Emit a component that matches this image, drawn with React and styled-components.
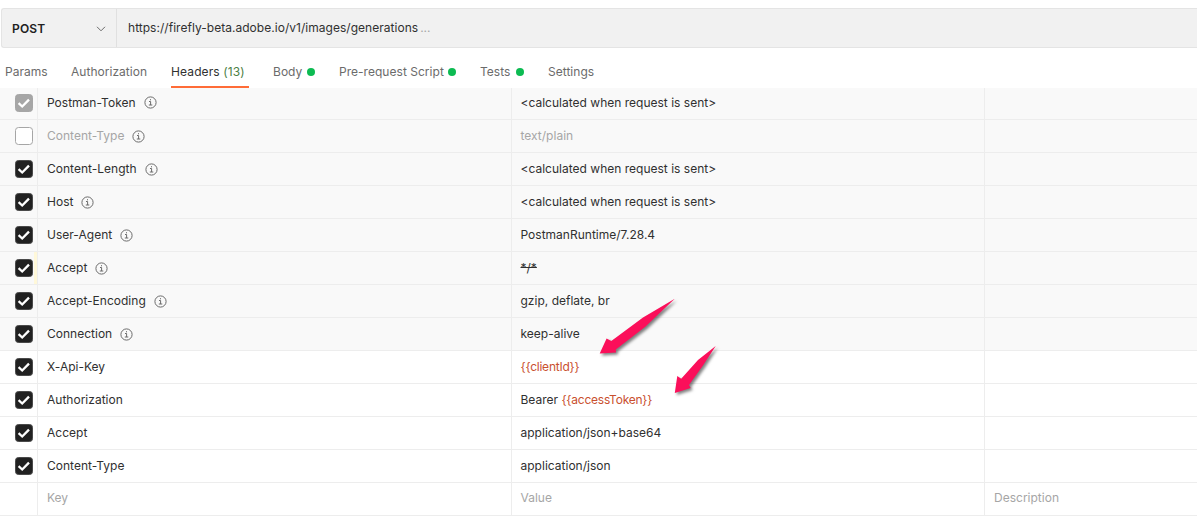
import React from "react";
import styled, { createGlobalStyle } from "styled-components";

const GlobalStyle = createGlobalStyle`
  * { box-sizing: border-box; }
  body {
    margin: 0;
    background: #fff;
    color: #303030;
    font: 400 12px/20px Inter, "Liberation Sans", sans-serif;
    overflow: hidden;
  }
`;

const Page = styled.main`
  position: relative;
  width: 1197px;
  height: 518px;
  padding-top: 8px;
  overflow: hidden;
`;

const UrlBar = styled.div`
  display: flex;
  height: 40px;
  margin-left: 1px;
  background: #f1f1f1;
  border: 1px solid #e4e4e4;
  border-right: 0;
  border-radius: 3px 0 0 3px;
`;

const Method = styled.div`
  display: flex;
  align-items: center;
  justify-content: space-between;
  width: 115px;
  padding: 2px 10px 0 10px;
  border-right: 1px solid #e0e0e0;
  color: #212121;
  font-weight: 600;
`;

const Url = styled.div`
  display: flex;
  align-items: center;
  padding-left: 11px;
`;

const Ellipsis = styled.span`
  color: #a6a6a6;
  margin-left: 2px;
`;

const Tabs = styled.nav`
  display: flex;
  gap: 24px;
  height: 40px;
  padding: 14px 0 0 5px;
`;

const Tab = styled.div`
  display: flex;
  justify-content: space-between;
  align-items: center;
  width: ${(p) => p.$width}px;
  height: 26px;
  padding-bottom: ${(p) => (p.$active ? 4 : 6)}px;
  white-space: nowrap;
  color: ${(p) => (p.$active ? "#303030" : "#6b6b6b")};
  border-bottom: ${(p) => (p.$active ? "2px solid #ff6c37" : "0")};
`;

const Count = styled.span`
  color: #4c8046;
`;

const Dot = styled.span`
  width: 8px;
  height: 8px;
  border-radius: 50%;
  background: #0cbb52;
`;

const Cell = styled.div`
  display: flex;
  align-items: center;
  gap: 8px;
  padding: 0 0 0 ${(p) => (p.$value ? 8.5 : 9)}px;
  white-space: pre;
  color: ${(p) => (p.$muted ? "#a6a6a6" : "#303030")};
  border-right: 1px solid #ededed;
  text-decoration: ${(p) => (p.$struck ? "line-through" : "none")};
  &:last-child { border-right: 0; }
`;

const CheckCell = styled.div`
  display: flex;
  align-items: center;
  padding-left: 15px;
  border-right: 1px solid #ededed;
  box-shadow: ${(p) => (p.$marked ? "inset -3px 0 0 #fff8d9" : "none")};
`;

const Row = styled.div`
  display: grid;
  grid-template-columns: 38px 474px 473px 1fr;
  height: ${(p) => (p.$first ? 32 : 33)}px;
  background: ${(p) => (p.$auto ? "#f9f9f9" : "#fff")};
  border-bottom: 1px solid #ededed;
  ${Cell} { padding-bottom: ${(p) => (p.$first || p.$entry ? 2 : 0)}px; }
  ${CheckCell} { padding-bottom: ${(p) => (p.$first ? 1 : 0)}px; }
`;

const Variable = styled.span`
  color: #c9502f;
  letter-spacing: -0.23px;
`;

const Arrows = styled.svg`
  position: absolute;
  left: 590px;
  top: 288px;
  filter: drop-shadow(2px 2px 1.5px rgba(0, 0, 0, 0.5));
`;

const Text = styled.span`
  letter-spacing: ${(p) => p.$spacing ?? 0.01}px;
`;

function Checkbox({ state }) {
  const fill = { on: "#212121", locked: "#a6a6a6", off: "#fff" }[state];
  const stroke = state === "on" ? "#4a4a4a" : "#a6a6a6";
  return (
    <svg width="18" height="18" viewBox="0 0 18 18">
      <rect x="0.5" y="0.5" width="17" height="17" rx="3" fill={fill} stroke={stroke} />
      {state !== "off" && <path d="M3.6 9.2L7.2 12.5L14 5.6" fill="none" stroke="#fff" strokeWidth="2.3" />}
    </svg>
  );
}

function Info() {
  return (
    <svg width="13" height="13" viewBox="0 0 13 13" fill="none" stroke="#6b6b6b">
      <circle cx="6.5" cy="6.5" r="5.6" />
      <path d="M5 5.5H6.6V9M4.8 9H8.3M6.5 3.2V4.3" />
    </svg>
  );
}

const tabs = [
  { label: "Params", width: 42 },
  { label: "Authorization", width: 76 },
  { label: "Headers", width: 78, count: "(13)" },
  { label: "Body", width: 42, dot: true },
  { label: "Pre-request Script", width: 117, dot: true },
  { label: "Tests", width: 44, dot: true },
  { label: "Settings", width: 47 },
];

const calculated = "<calculated when request is sent>";
const headers = [
  { name: "Postman-Token", value: calculated, auto: true, state: "locked" },
  { name: "Content-Type", value: "text/plain", auto: true, state: "off" },
  { name: "Content-Length", value: calculated, auto: true },
  { name: "Host", value: calculated, auto: true },
  { name: "User-Agent", value: "PostmanRuntime/7.28.4", auto: true },
  { name: "Accept", value: "*/*", auto: true, struck: true },
  { name: "Accept-Encoding", value: "gzip, deflate, br", auto: true },
  { name: "Connection", value: "keep-alive", auto: true },
  { name: "X-Api-Key", variable: "{{clientId}}" },
  { name: "Authorization", value: "Bearer ", variable: "{{accessToken}}" },
  { name: "Accept", value: "application/json+base64" },
  { name: "Content-Type", value: "application/json" },
];

export default function App() {
  return (
    <Page>
      <GlobalStyle />
      <UrlBar>
        <Method>
          <Text $spacing={0.15}>POST</Text>
          <svg width="10" height="6" viewBox="0 0 10 6" fill="none" stroke="#6b6b6b">
            <path d="M1 0.8L5 4.8L9 0.8" />
          </svg>
        </Method>
        <Url>
          <Text $spacing={0.03}>https://firefly-beta.adobe.io/v1/images/generations</Text>
          <Ellipsis>...</Ellipsis>
        </Url>
      </UrlBar>
      <Tabs>
        {tabs.map((t) => (
          <Tab key={t.label} $width={t.width} $active={!!t.count}>
            <Text $spacing={t.count ? 0.12 : 0.03}>
              {t.label}
              {t.count && <Count> {t.count}</Count>}
            </Text>
            {t.dot && <Dot />}
          </Tab>
        ))}
      </Tabs>
      {headers.map((h, i) => (
        <Row key={i} $first={i === 0} $auto={h.auto}>
          <CheckCell $marked={h.struck}>
            <Checkbox state={h.state ?? "on"} />
          </CheckCell>
          <Cell $muted={h.state === "off"}>
            <Text>{h.name}</Text>
            {h.auto && <Info />}
          </Cell>
          <Cell $value $muted={h.state === "off"} $struck={h.struck}>
            <Text>
              {h.value}
              {h.variable && <Variable>{h.variable}</Variable>}
            </Text>
          </Cell>
          <Cell />
        </Row>
      ))}
      <Row $entry>
        <CheckCell />
        <Cell $muted><Text>Key</Text></Cell>
        <Cell $value $muted><Text>Value</Text></Cell>
        <Cell $muted><Text>Description</Text></Cell>
      </Row>
      <Arrows width="140" height="115" viewBox="590 288 140 115" fill="#fb0f5a">
        <path d="M674.8 298.8L643 317.5L611.3 341L606.6 338.5L599.7 353.4L616 352.6L615.8 349.6L645 327Z" />
        <path d="M715.7 346L698 360L681.2 378.7L677.3 376L674.8 393L690.6 388L689 385L703 365.5Z" />
      </Arrows>
    </Page>
  );
}
